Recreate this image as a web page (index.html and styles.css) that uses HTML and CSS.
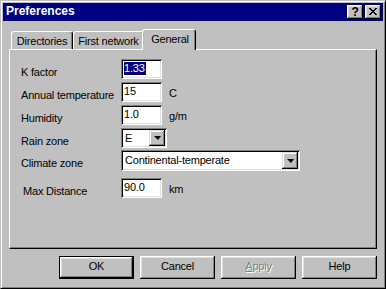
FILE: index.html
```html
<!DOCTYPE html>
<html>
<head>
<meta charset="utf-8">
<link rel="stylesheet" href="styles.css">
</head>
<body>
<div class="window">
  <div class="titlebar">
    <span class="title">Preferences</span>
    <span class="tb-btn help">?</span>
    <span class="tb-btn close"><svg width="8" height="7" viewBox="0 0 8 7"><path d="M0 0h2v1h1v1h2v-1h1v-1h2v1h-1v1h-1v1h-1v1h1v1h1v1h1v1h-2v-1h-1v-1h-2v1h-1v1h-2v-1h1v-1h1v-1h1v-1h-1v-1h-1v-1h-1z" fill="#000"/></svg></span>
  </div>
  <div class="tabs">
    <div class="tab t-dir">Directories</div>
    <div class="tab t-net">First network</div>
    <div class="tab active t-gen">General</div>
  </div>
  <div class="panel">
    <div class="row r1">
      <span class="label">K factor</span>
      <span class="edit"><span class="sel">1.33</span></span>
    </div>
    <div class="row r2">
      <span class="label">Annual temperature</span>
      <span class="edit">15</span>
      <span class="unit">C</span>
    </div>
    <div class="row r3">
      <span class="label">Humidity</span>
      <span class="edit">1.0</span>
      <span class="unit">g/m</span>
    </div>
    <div class="row r4">
      <span class="label">Rain zone</span>
      <span class="combo small"><span class="val">E</span><span class="drop"><i class="tri"></i></span></span>
    </div>
    <div class="row r5">
      <span class="label">Climate zone</span>
      <span class="combo wide"><span class="val">Continental-temperate</span><span class="drop"><i class="tri"></i></span></span>
    </div>
    <div class="row r6">
      <span class="label ld">Max Distance</span>
      <span class="edit">90.0</span>
      <span class="unit">km</span>
    </div>
  </div>
  <div class="footer">
    <div class="btn default">OK</div>
    <div class="btn">Cancel</div>
    <div class="btn disabled"><u>A</u>pply</div>
    <div class="btn">Help</div>
  </div>
</div>
</body>
</html>
```
FILE: styles.css
```css
html, body {
  margin: 0;
  padding: 0;
  background: #c0c0c0;
}
body {
  font-family: "Liberation Sans", Arial, sans-serif;
  font-size: 11px;
  letter-spacing: -0.2px;
  color: #000;
  -webkit-font-smoothing: none;
}
.window {
  width: 386px;
  height: 289px;
  box-sizing: border-box;
  background: #c0c0c0;
  border: 1px solid;
  border-color: #c0c0c0 #000 #000 #c0c0c0;
  box-shadow: inset 1px 1px #fff, inset -1px -1px #808080;
  padding: 2px;
  display: flex;
  flex-direction: column;
}
.titlebar {
  height: 18px;
  background: #000080;
  display: flex;
  align-items: center;
  padding: 0 2px 0 3px;
}
.title {
  color: #fff;
  font-weight: bold;
  font-size: 12px;
  letter-spacing: 0;
  flex: 1;
  position: relative;
  top: -1px;
}
.tb-btn {
  width: 16px;
  height: 14px;
  box-sizing: border-box;
  background: #c0c0c0;
  box-shadow: inset -1px -1px #000, inset 1px 1px #fff, inset -2px -2px #808080, inset 2px 2px #dfdfdf;
  display: flex;
  align-items: center;
  justify-content: center;
}
.help {
  font-weight: bold;
  font-size: 12px;
  line-height: 14px;
  margin-right: 2px;
}
.close svg { display: block; margin-top: -1px; }
.tabs {
  display: flex;
  align-items: flex-end;
  height: 20px;
  margin-top: 8px;
  padding-left: 8px;
  position: relative;
  z-index: 1;
}
.tab {
  height: 18px;
  box-sizing: border-box;
  padding-top: 3px;
  text-align: center;
  border-radius: 3px 3px 0 0;
  border-top: 1px solid #fff;
  border-left: 1px solid #fff;
  border-right: 1px solid #000;
  box-shadow: inset -1px 0 #808080;
  background: #c0c0c0;
}
.t-dir { width: 62px; }
.t-net { width: 71px; }
.tab.active {
  width: 54px;
  height: 21px;
  margin-left: -2px;
  margin-bottom: -1px;
  padding-top: 3px;
  padding-left: 2px;
}
.panel {
  margin: 0 6px;
  height: 200px;
  box-sizing: border-box;
  border-top: 1px solid #fff;
  border-left: 1px solid #fff;
  border-right: 1px solid #000;
  border-bottom: 1px solid #000;
  box-shadow: inset -1px -1px #808080;
  padding: 9px 0 0 11px;
  display: flex;
  flex-direction: column;
}
.row {
  display: flex;
  align-items: flex-start;
}
.r1, .r2, .r3 { height: 23px; }
.r4 { height: 22px; }
.r5 { height: 28px; }
.label {
  width: 100px;
  padding-top: 7px;
  line-height: 13px;
}
.ld { padding-left: 2px; width: 98px; }
.edit {
  width: 41px;
  height: 20px;
  box-sizing: border-box;
  background: #fff;
  box-shadow: inset 1px 1px #808080, inset -1px -1px #fff, inset 2px 2px #000, inset -2px -2px #dfdfdf;
  padding: 3px 0 0 3px;
  line-height: 13px;
}
.sel {
  background: #000080;
  color: #fff;
  display: inline-block;
  padding-right: 1px;
}
.unit {
  margin-left: 7px;
  padding-top: 5px;
  line-height: 13px;
}
.combo {
  height: 20px;
  box-sizing: border-box;
  background: #fff;
  box-shadow: inset 1px 1px #808080, inset -1px -1px #fff, inset 2px 2px #000, inset -2px -2px #dfdfdf;
  padding: 2px;
  display: flex;
}
.combo.small { width: 46px; }
.combo.wide { width: 179px; height: 21px; }
.val {
  flex: 1;
  padding: 2px 0 0 2px;
  line-height: 13px;
}
.drop {
  width: 16px;
  background: #c0c0c0;
  box-shadow: inset -1px -1px #000, inset 1px 1px #dfdfdf, inset -2px -2px #808080, inset 2px 2px #fff;
  display: flex;
  align-items: center;
  justify-content: center;
}
.tri {
  width: 0;
  height: 0;
  border-left: 4px solid transparent;
  border-right: 3px solid transparent;
  border-top: 4px solid #000;
  margin-left: 1px;
}
.footer {
  display: flex;
  justify-content: flex-end;
  gap: 6px;
  margin-top: 7px;
  padding-right: 6px;
}
.btn {
  width: 75px;
  height: 23px;
  box-sizing: border-box;
  box-shadow: inset -1px -1px #000, inset 1px 1px #fff, inset -2px -2px #808080, inset 2px 2px #dfdfdf;
  text-align: center;
  line-height: 21px;
}
.btn.default {
  border: 1px solid #000;
  line-height: 19px;
}
.btn.disabled {
  color: #808080;
  text-shadow: 1px 1px #fff;
}
.btn u { text-decoration: underline; }
```
